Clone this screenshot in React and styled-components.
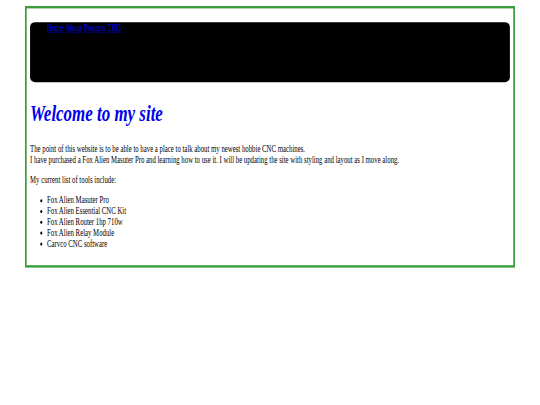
import React from "react";
import styled, { createGlobalStyle } from "styled-components";

const SX = 0.4235;
const SY = 0.6;

const Global = createGlobalStyle`
  html, body {
    margin: 0;
    padding: 0;
    background: #ffffff;
    overflow: hidden;
  }
`;

const Stage = styled.div`
  width: 540px;
  height: 405px;
  overflow: hidden;
`;

const Canvas = styled.div`
  width: ${540 / SX}px;
  transform: scale(${SX}, ${SY});
  transform-origin: 0 0;
  padding-top: 10px;
  font-family: "Liberation Serif", "Times New Roman", serif;
  font-size: 16px;
  color: #000;
`;

const Container = styled.main`
  margin: 0 59px;
  border: 4px solid #3a9c3a;
  padding: 9px 8px 11px;
`;

const Nav = styled.nav`
  margin-top: 14px;
  height: 100px;
  background: #000;
  border-radius: 12px / 8px;
`;

const NavList = styled.ul`
  margin: 0;
  padding: 1px 0 0 40px;
  list-style: none;
  display: flex;
  gap: 4px;
`;

const NavLink = styled.a`
  color: #0000ee;
  text-decoration: underline;
`;

const Title = styled.h1`
  margin: 26.8px 0 28.5px;
  font-size: 40px;
  font-weight: bold;
  font-style: italic;
  color: #0000ee;
`;

const Para = styled.p`
  margin: 16px 0;
`;

const Tools = styled.ul`
  margin: 16px 0;
  padding-left: 40px;
`;

const links = ["Home", "About", "Projects", "TBD"];
const tools = [
  "Fox Alien Masuter Pro",
  "Fox Alien Essential CNC Kit",
  "Fox Alien Router 1hp 710w",
  "Fox Alien Relay Module",
  "Carvco CNC software",
];

export default function App() {
  return (
    <Stage>
      <Global />
      <Canvas>
        <Container>
          <Nav>
            <NavList>
              {links.map((l) => (
                <li key={l}>
                  <NavLink href="#">{l}</NavLink>
                </li>
              ))}
            </NavList>
          </Nav>
          <Title>Welcome to my site</Title>
          <Para>
            The point of this website is to be able to have a place to talk about my newest hobbie CNC machines.
            <br />
            I have purchased a Fox Alien Masuter Pro and learning how to use it. I will be updating the site with styling and layout as I move along.
          </Para>
          <Para>My current list of tools include:</Para>
          <Tools>
            {tools.map((t) => (
              <li key={t}>{t}</li>
            ))}
          </Tools>
        </Container>
      </Canvas>
    </Stage>
  );
}
